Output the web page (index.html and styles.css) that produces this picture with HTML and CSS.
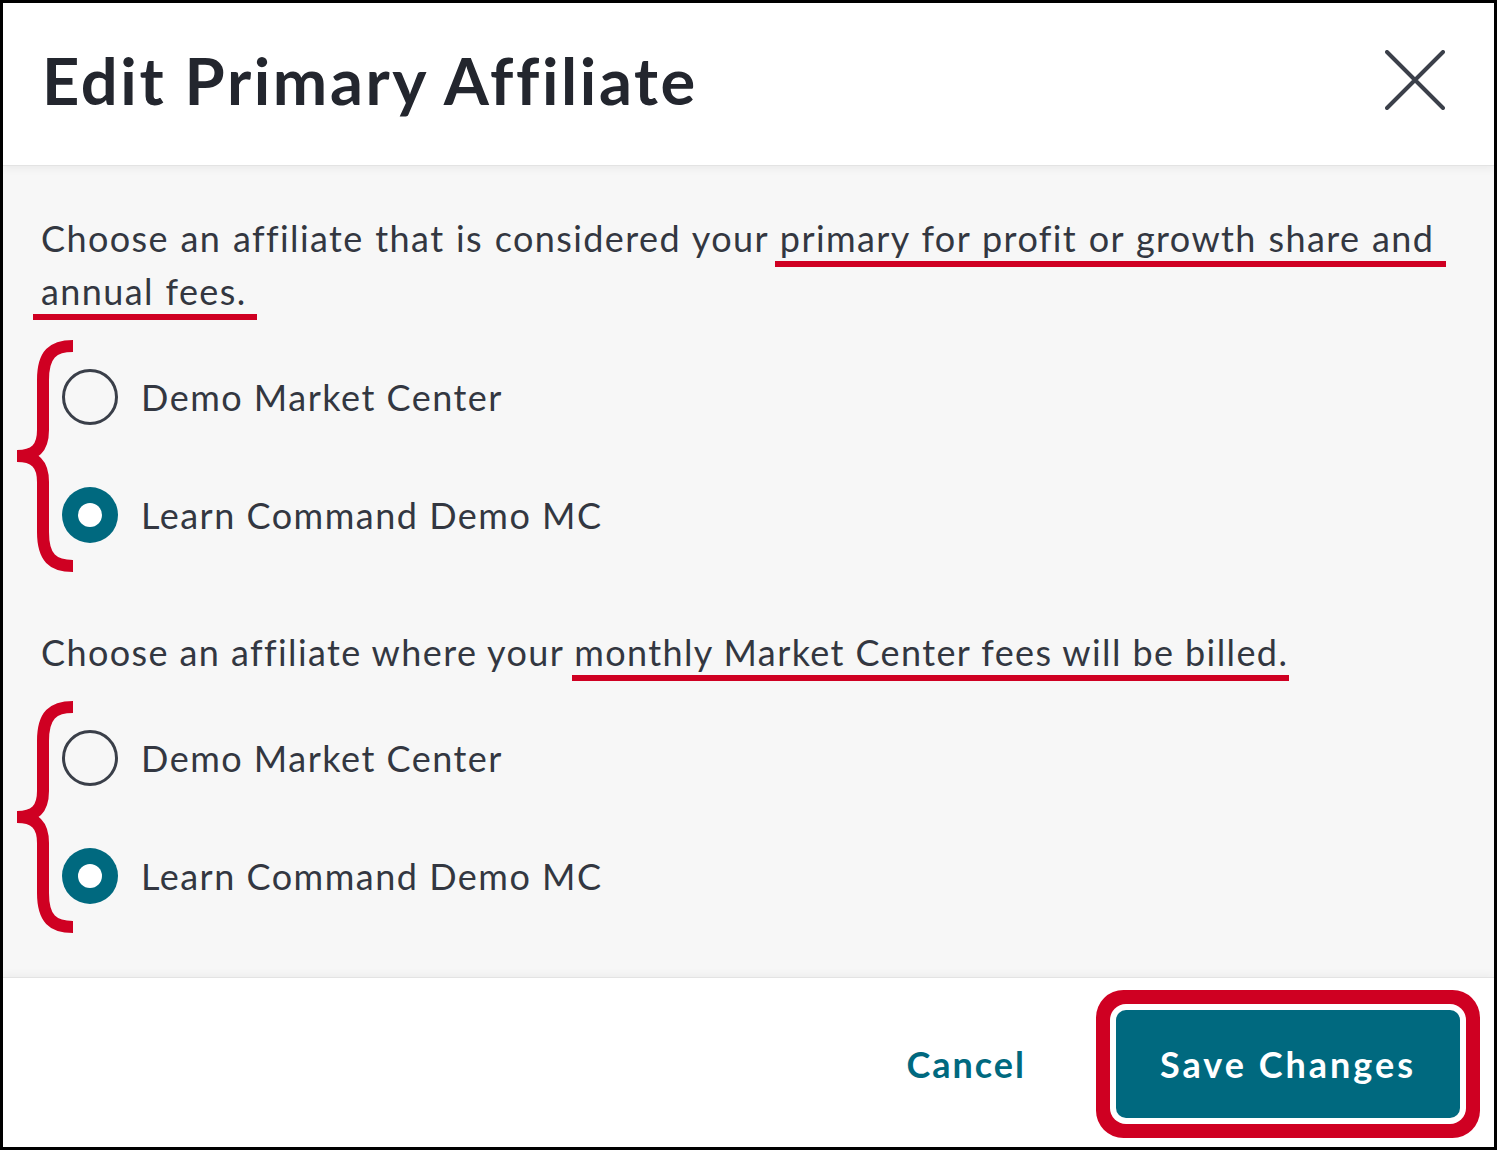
FILE: index.html
```html
<!DOCTYPE html>
<html lang="en">
<head>
<meta charset="utf-8">
<title>Edit Primary Affiliate</title>
<link rel="stylesheet" href="styles.css">
</head>
<body>
<div class="modal">
  <header class="modal-header">
    <h1 class="modal-title">Edit Primary Affiliate</h1>
    <button class="close-btn" aria-label="Close">
      <svg width="60" height="60" viewBox="0 0 60 60"><path d="M2 2 L58 58 M58 2 L2 58" stroke="#3b404a" stroke-width="4" stroke-linecap="round" fill="none"/></svg>
    </button>
  </header>
  <main class="modal-body">
    <p class="prompt prompt-1">Choose an affiliate that is considered your <span class="mark mark-a">primary for profit or growth share and</span> <span class="mark mark-b">annual fees.</span></p>
    <div class="radio-group">
      <svg class="brace" width="60" height="232" viewBox="0 0 60 232"><path d="M60,6 C40,6 30,14 30,40 L30,90 C30,108 22,116 4,116 M4,116 C22,116 30,124 30,142 L30,192 C30,218 40,226 60,226" stroke="#cf0022" stroke-width="12" fill="none"/></svg>
      <label class="radio-row"><span class="radio"></span><span class="radio-label">Demo Market Center</span></label>
      <label class="radio-row"><span class="radio checked"></span><span class="radio-label">Learn Command Demo MC</span></label>
    </div>
    <p class="prompt prompt-2">Choose an affiliate where your <span class="mark mark-c">monthly Market Center fees will be billed.</span></p>
    <div class="radio-group">
      <svg class="brace" width="60" height="232" viewBox="0 0 60 232"><path d="M60,6 C40,6 30,14 30,40 L30,90 C30,108 22,116 4,116 M4,116 C22,116 30,124 30,142 L30,192 C30,218 40,226 60,226" stroke="#cf0022" stroke-width="12" fill="none"/></svg>
      <label class="radio-row"><span class="radio"></span><span class="radio-label">Demo Market Center</span></label>
      <label class="radio-row"><span class="radio checked"></span><span class="radio-label">Learn Command Demo MC</span></label>
    </div>
  </main>
  <footer class="modal-footer">
    <button class="btn-cancel">Cancel</button>
    <button class="btn-save">Save Changes</button>
  </footer>
</div>
</body>
</html>
```

FILE: styles.css
```css
* { box-sizing: border-box; }

html, body {
  margin: 0;
  padding: 0;
  background: #ffffff;
}

body {
  font-family: Lato, "Noto Sans", "Liberation Sans", sans-serif;
  color: #333741;
}

.modal {
  width: 1497px;
  height: 1150px;
  border: 3px solid #000;
  display: flex;
  flex-direction: column;
  background: #fff;
  overflow: hidden;
}

.modal-header {
  height: 163px;
  flex: none;
  display: flex;
  align-items: center;
  justify-content: space-between;
  padding: 0 49px 8px 39px;
  border-bottom: 1px solid #e3e3e3;
  position: relative;
  z-index: 1;
  box-shadow: 0 3px 8px rgba(0, 0, 0, 0.05);
  background: #fff;
}

.modal-title {
  margin: 0;
  font-size: 65px;
  font-weight: 700;
  color: #23262e;
  letter-spacing: 2.6px;
}

.close-btn {
  background: none;
  border: 0;
  padding: 0;
  width: 60px;
  height: 60px;
  display: flex;
}

.modal-body {
  flex: 1;
  background: #f7f7f7;
  padding: 46px 38px 0 38px;
}

.prompt {
  margin: 0;
  font-size: 36px;
  line-height: 53px;
  color: #333741;
  letter-spacing: 1.4px;
}

.prompt-1 {
  word-spacing: 1px;
}

.prompt-2 {
  margin-top: 83px;
}

.mark {
  position: relative;
}

.mark::after {
  content: "";
  position: absolute;
  height: 6px;
  bottom: -7px;
  background: #cf0022;
}

.mark-a::after {
  left: -5px;
  right: -12px;
}

.mark-b::after {
  left: -8px;
  right: -10px;
}

.mark-c::after {
  left: -2px;
  right: -1px;
}

.radio-group {
  position: relative;
  margin-top: 51px;
  padding-left: 21px;
  display: flex;
  flex-direction: column;
  gap: 62px;
}

.brace {
  position: absolute;
  left: -28px;
  top: -29px;
}

.radio-row {
  display: flex;
  align-items: center;
  gap: 23px;
  height: 56px;
}

.radio {
  width: 56px;
  height: 56px;
  border-radius: 50%;
  border: 3px solid #3a3f49;
  flex: none;
  position: relative;
}

.radio.checked {
  border: 0;
  background: #00697f;
}

.radio.checked::after {
  content: "";
  position: absolute;
  left: 16px;
  top: 16px;
  width: 24px;
  height: 24px;
  border-radius: 50%;
  background: #fff;
}

.radio-label {
  font-size: 36px;
  color: #333741;
  letter-spacing: 1.5px;
}

.modal-footer {
  height: 170px;
  flex: none;
  border-top: 1px solid #e3e3e3;
  box-shadow: 0 -3px 8px rgba(0, 0, 0, 0.04);
  background: #fff;
  display: flex;
  align-items: center;
  justify-content: flex-end;
  padding: 2px 34px 0 0;
  gap: 90px;
  position: relative;
}

.btn-cancel {
  background: none;
  border: 0;
  padding: 0;
  font-family: inherit;
  font-size: 36px;
  font-weight: 700;
  color: #00697f;
  letter-spacing: 2px;
}

.btn-save {
  width: 344px;
  height: 108px;
  border: 0;
  border-radius: 10px;
  background: #00697f;
  color: #fff;
  font-family: inherit;
  font-size: 36px;
  font-weight: 700;
  letter-spacing: 3px;
  box-shadow: 0 0 0 6px #fff, 0 0 0 20px #cf0022;
}
```
